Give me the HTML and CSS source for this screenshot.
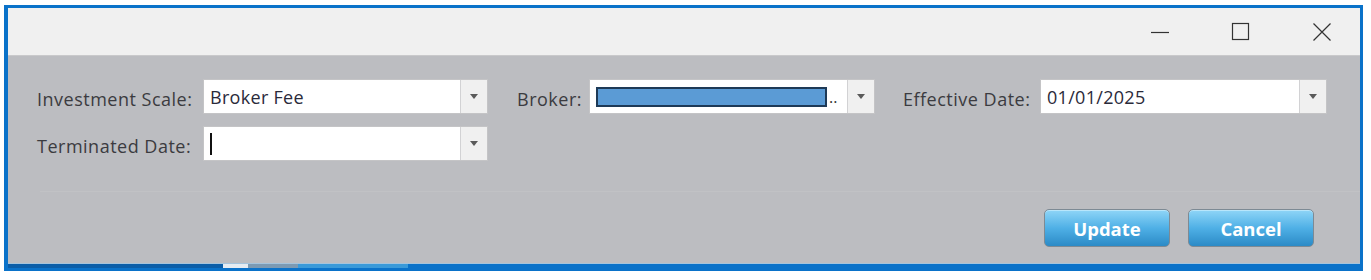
FILE: index.html
```html
<!DOCTYPE html>
<html lang="en">
<head>
    <meta charset="UTF-8">
    <title>Broker Fee</title>
    <link rel="stylesheet" href="styles.css">
</head>
<body>
    <div class="window">
        <!-- title bar -->
        <div class="titlebar">
            <div class="ctl">
                <svg width="20" height="20" viewBox="0 0 20 20"><path d="M1 10.5h18" stroke="#333" stroke-width="1.2" fill="none"/></svg>
            </div>
            <div class="ctl">
                <svg width="20" height="20" viewBox="0 0 20 20"><rect x="1.5" y="1.5" width="16" height="16" stroke="#333" stroke-width="1.2" fill="none"/></svg>
            </div>
            <div class="ctl">
                <svg width="20" height="20" viewBox="0 0 20 20"><path d="M1.5 1.5l17 17M18.5 1.5l-17 17" stroke="#333" stroke-width="1.2" fill="none"/></svg>
            </div>
        </div>
        <!-- form -->
        <div class="body">
            <div class="row">
                <label class="lbl lbl-scale">Investment Scale:</label>
                <div class="combo c1">
                    <div class="val">Broker Fee</div>
                    <div class="arrow"></div>
                </div>
                <label class="lbl lbl-broker">Broker:</label>
                <div class="combo c2">
                    <div class="val"><span class="mask"></span><span class="dots">..</span></div>
                    <div class="arrow"></div>
                </div>
                <label class="lbl lbl-eff">Effective Date:</label>
                <div class="combo c3">
                    <div class="val">01/01/2025</div>
                    <div class="arrow"></div>
                </div>
            </div>
            <div class="row">
                <label class="lbl lbl-scale">Terminated Date:</label>
                <div class="combo c1">
                    <div class="val"><span class="caret"></span></div>
                    <div class="arrow"></div>
                </div>
            </div>
            <div class="sep"></div>
            <div class="buttons">
                <button class="btn">Update</button>
                <button class="btn">Cancel</button>
            </div>
        </div>
        <div class="bottom">
            <span class="seg s1"></span>
            <span class="seg s2"></span>
            <span class="seg s3"></span>
            <span class="seg s4"></span>
        </div>
    </div>
</body>
</html>
```

FILE: styles.css
```css
*{
    padding: 0;
    margin: 0;
    box-sizing: border-box;
}
body{
    background: #fff;
    font-family: "Open Sans", "Noto Sans", sans-serif;
}
.window{
    margin: 5px 0 0 4px;
    width: 1359px;
    border: 3px solid #0a72c9;
    border-left-width: 4px;
    border-bottom: 0;
    background: #bcbdc1;
}
.titlebar{
    height: 48px;
    background: #f0f0f0;
    border-bottom: 1px solid #c9c9cb;
    display: flex;
    justify-content: flex-end;
    align-items: center;
    padding-right: 28px;
}
.ctl{
    width: 20px;
    height: 20px;
    margin-left: 61px;
}
.body{
    height: 207px;
    padding: 23px 0 0 29px;
}
.row{
    display: flex;
    align-items: center;
    height: 35px;
    margin-bottom: 12px;
}
.lbl{
    font-size: 18px;
    color: #3b3b40;
    letter-spacing: 0.5px;
    padding-top: 5px;
    white-space: nowrap;
}
.lbl-scale{ width: 166px; }
.lbl-broker{ width: 72px; margin-left: 29px; }
.lbl-eff{ width: 137px; margin-left: 28px; }
.combo{
    display: flex;
    height: 35px;
    border: 1px solid #c4c4c6;
    background: #fff;
}
.c1{ width: 285px; }
.c2{ width: 286px; }
.c3{ width: 287px; }
.val{
    flex: 1;
    display: flex;
    align-items: center;
    padding-left: 6px;
    font-size: 18px;
    letter-spacing: 0.3px;
    color: #2a2a3a;
}
.arrow{
    width: 27px;
    background: #f0f0f0;
    border-left: 1px solid #d2d2d4;
    position: relative;
}
.arrow::after{
    content: "";
    position: absolute;
    left: 9px;
    top: 14px;
    border-left: 4px solid transparent;
    border-right: 4px solid transparent;
    border-top: 5px solid #5a5a5a;
}
.mask{
    width: 231px;
    height: 20px;
    background: #5b9bd5;
    border: 2px solid #1e3a57;
}
.dots{
    margin-left: 2px;
    font-size: 16px;
    color: #333;
    align-self: flex-end;
    padding-bottom: 5px;
    letter-spacing: 0;
}
.caret{
    width: 2px;
    height: 22px;
    background: #111;
}
.sep{
    margin: 30px 0 0 3px;
    height: 1px;
    background: #c1c2c5;
}
.buttons{
    display: flex;
    justify-content: flex-end;
    gap: 18px;
    padding: 17px 46px 0 0;
}
.btn{
    width: 126px;
    height: 38px;
    border: 1px solid #7d8a94;
    border-radius: 5px;
    background: linear-gradient(#8fd5f7, #4fb0e6 50%, #2b8ac6);
    color: #fff;
    font-family: "Open Sans", sans-serif;
    font-weight: bold;
    font-size: 18.5px;
    box-shadow: inset 0 1px 0 #b8e6fb;
}
.bottom{
    height: 8px;
    background: #0a72c9;
    border-top: 1px solid #a5c4dc;
    display: flex;
}
.seg{ height: 4px; margin-top: 0; }
.s1{ width: 215px; background: #0b5ea8; }
.s2{ width: 25px; background: #e6ecf2; }
.s3{ width: 50px; background: #7c9ab3; }
.s4{ width: 110px; background: #3a9ad9; }
```
